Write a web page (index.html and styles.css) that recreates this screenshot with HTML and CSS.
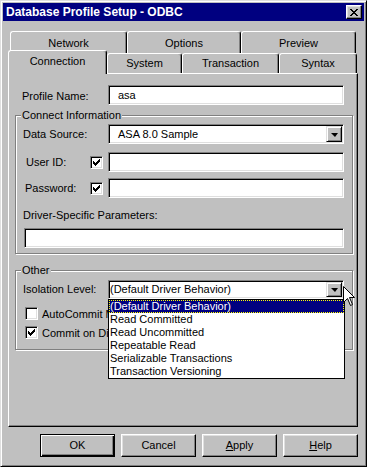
FILE: index.html
```html
<!DOCTYPE html>
<html lang="en">
<head>
    <meta charset="UTF-8">
    <title>Database Profile Setup - ODBC</title>
    <link rel="stylesheet" href="styles.css">
</head>
<body>
    <div class="window">
        <div class="titlebar">
            <span class="title">Database Profile Setup - ODBC</span>
            <span class="close">
                <svg width="8" height="7" viewBox="0 0 8 7">
                    <path d="M0 0h2v1h1v1h2v-1h1v-1h2v1h-1v1h-1v1h-1v1h1v1h1v1h1v1h-2v-1h-1v-1h-2v1h-1v1h-2v-1h1v-1h1v-1h1v-1h-1v-1h-1z" fill="#000"/>
                </svg>
            </span>
        </div>

        <div class="content">
            <!-- Tab strip, two rows -->
            <div class="tabrow back">
                <div class="tab t-network">Network</div>
                <div class="tab t-options">Options</div>
                <div class="tab t-preview">Preview</div>
            </div>
            <div class="tabrow front">
                <div class="tab selected t-connection">Connection</div>
                <div class="tab t-system">System</div>
                <div class="tab t-transaction">Transaction</div>
                <div class="tab t-syntax">Syntax</div>
            </div>

            <div class="panel">
                <div class="row profile">
                    <label class="lbl">Profile Name:</label>
                    <div class="field">asa</div>
                </div>

                <fieldset class="group connect">
                    <legend>Connect Information</legend>
                    <div class="row">
                        <label class="lbl">Data Source:</label>
                        <div class="combo">
                            <span class="combo-text">ASA 8.0 Sample</span>
                            <span class="arrow"><span class="tri"></span></span>
                        </div>
                    </div>
                    <div class="row user">
                        <label class="lbl-short uid">User ID:</label>
                        <span class="check"><svg width="7" height="7" viewBox="0 0 7 7"><path d="M6 0h1v3h-1v1h-1v1h-1v1h-1v1h-1v-1h-1v-1h-1v-3h1v1h1v1h1v-1h1v-1h1z" fill="#000"/></svg></span>
                        <div class="field"></div>
                    </div>
                    <div class="row pass">
                        <label class="lbl-short pwd">Password:</label>
                        <span class="check"><svg width="7" height="7" viewBox="0 0 7 7"><path d="M6 0h1v3h-1v1h-1v1h-1v1h-1v1h-1v-1h-1v-1h-1v-3h1v1h1v1h1v-1h1v-1h1z" fill="#000"/></svg></span>
                        <div class="field"></div>
                    </div>
                    <div class="driver-label">Driver-Specific Parameters:</div>
                    <div class="field wide"></div>
                </fieldset>

                <fieldset class="group other">
                    <legend>Other</legend>
                    <div class="row iso">
                        <label class="lbl">Isolation Level:</label>
                        <div class="combo plain">
                            <span class="combo-text">(Default Driver Behavior)</span>
                            <span class="arrow"><span class="tri"></span></span>
                            <ul class="list">
                                <li class="sel">(Default Driver Behavior)</li>
                                <li>Read Committed</li>
                                <li>Read Uncommitted</li>
                                <li>Repeatable Read</li>
                                <li>Serializable Transactions</li>
                                <li>Transaction Versioning</li>
                            </ul>
                        </div>
                    </div>
                    <div class="checkrow first">
                        <span class="check"></span>
                        <span>AutoCommit Mode</span>
                    </div>
                    <div class="checkrow">
                        <span class="check"><svg width="7" height="7" viewBox="0 0 7 7"><path d="M6 0h1v3h-1v1h-1v1h-1v1h-1v1h-1v-1h-1v-1h-1v-3h1v1h1v1h1v-1h1v-1h1z" fill="#000"/></svg></span>
                        <span>Commit on Disconnect</span>
                    </div>
                </fieldset>
            </div>

            <div class="buttons">
                <div class="btn default">OK</div>
                <div class="btn">Cancel</div>
                <div class="btn"><u>A</u>pply</div>
                <div class="btn"><u>H</u>elp</div>
            </div>
        </div>

        <!-- mouse pointer over the combo arrow -->
        <svg class="cursor" width="12" height="20" viewBox="0 0 12 20">
            <path d="M0.5 0.5 L0.5 16.5 L4.5 12.5 L7.5 19.5 L9.5 18.5 L6.5 11.5 L11.5 11.5 Z" fill="#fff" stroke="#000" stroke-width="1"/>
        </svg>
    </div>
</body>
</html>
```

FILE: styles.css
```css
body {
    margin: 0;
    background: #c0c0c0;
    font-family: "Liberation Sans", Arial, sans-serif;
    font-size: 11px;
    color: #000;
}
.window {
    position: relative;
    width: 367px;
    height: 467px;
    box-sizing: border-box;
    background: #c0c0c0;
    border: 1px solid;
    border-color: #dfdfdf #000 #000 #dfdfdf;
    box-shadow: inset 1px 1px #fff, inset -1px -1px #808080;
    padding: 2px;
}
.titlebar {
    height: 18px;
    background: #000080;
    color: #fff;
    display: flex;
    align-items: center;
    justify-content: space-between;
    padding: 0 2px 0 3px;
}
.title {
    font-weight: bold;
    font-size: 12px;
}
.close {
    width: 16px;
    height: 14px;
    box-sizing: border-box;
    background: #c0c0c0;
    border: 1px solid;
    border-color: #fff #000 #000 #fff;
    box-shadow: inset -1px -1px #808080, inset 1px 1px #dfdfdf;
    display: flex;
    align-items: center;
    justify-content: center;
}
.close svg {
    shape-rendering: crispEdges;
}
.content {
    padding: 10px 6px 0 5px;
}

/* tabs */
.tabrow {
    display: flex;
}
.tabrow.back {
    height: 22px;
    margin-left: 2px;
}
.tabrow.front {
    height: 20px;
    align-items: flex-end;
}
.tab {
    box-sizing: border-box;
    background: #c0c0c0;
    border: 1px solid;
    border-color: #fff #000 #c0c0c0 #fff;
    border-bottom: none;
    border-radius: 3px 3px 0 0;
    box-shadow: inset -1px 0 #808080;
    text-align: center;
    line-height: 13px;
}
.back .tab {
    height: 22px;
    padding-top: 5px;
}
.front .tab {
    height: 20px;
    padding-top: 3px;
}
.front .tab.selected {
    height: 24px;
    margin-bottom: -1px;
    padding-top: 4px;
    position: relative;
    z-index: 1;
}
.t-network { width: 117px; }
.t-options { width: 114px; }
.t-preview { width: 115px; }
.t-connection { width: 99px; }
.t-system { width: 75px; }
.t-transaction { width: 97px; }
.t-syntax { width: 78px; }

/* page of the tab control */
.panel {
    height: 354px;
    box-sizing: border-box;
    border: 1px solid;
    border-color: #fff #000 #000 #fff;
    box-shadow: inset -1px -1px #808080;
    padding: 11px 4px 0 6px;
}
.row {
    display: flex;
    align-items: center;
    height: 20px;
}
.row.profile {
    padding-left: 7px;
}
.lbl {
    width: 85px;
    flex: none;
}
.profile .lbl {
    width: 86px;
    padding-top: 2px;
}
.lbl-short {
    width: 64px;
    flex: none;
}
.uid { margin-left: 3px; }
.pwd { margin-left: 2px; width: 65px; }
.field {
    width: 236px;
    height: 20px;
    box-sizing: border-box;
    background: #fff;
    border: 1px solid;
    border-color: #808080 #fff #fff #808080;
    box-shadow: inset 1px 1px #000, inset -1px -1px #dfdfdf;
    padding-left: 9px;
    line-height: 18px;
}
.field.wide {
    width: 320px;
    margin: 6px 0 0 1px;
}
.check {
    width: 13px;
    height: 13px;
    box-sizing: border-box;
    flex: none;
    background: #fff;
    border: 1px solid;
    border-color: #808080 #fff #fff #808080;
    box-shadow: inset 1px 1px #000, inset -1px -1px #dfdfdf;
    display: flex;
    align-items: center;
    justify-content: center;
}
.check svg {
    shape-rendering: crispEdges;
}
.row.user .field,
.row.pass .field {
    margin-left: 5px;
}
.row.user { margin-top: 8px; }
.row.pass { margin-top: 6px; }
.driver-label {
    margin-top: 11px;
    line-height: 13px;
}

/* combo boxes */
.combo {
    position: relative;
    width: 236px;
    height: 20px;
    box-sizing: border-box;
    background: #fff;
    border: 1px solid;
    border-color: #808080 #fff #fff #808080;
    box-shadow: inset 1px 1px #000, inset -1px -1px #dfdfdf;
    display: flex;
    align-items: center;
    padding: 1px;
}
.combo.plain {
    height: 19px;
}
.combo-text {
    flex: 1;
    padding-left: 8px;
}
.plain .combo-text {
    padding-left: 0;
}
.arrow {
    width: 16px;
    height: 16px;
    box-sizing: border-box;
    background: #c0c0c0;
    border: 1px solid;
    border-color: #dfdfdf #000 #000 #dfdfdf;
    box-shadow: inset 1px 1px #fff, inset -1px -1px #808080;
    display: flex;
    align-items: center;
    justify-content: center;
}
.plain .arrow {
    height: 15px;
}
.tri {
    width: 0;
    height: 0;
    border-left: 4px solid transparent;
    border-right: 3px solid transparent;
    border-top: 4px solid #000;
    margin-top: 1px;
}
/* open drop-down list, lies over the check boxes */
.list {
    position: absolute;
    left: -1px;
    top: 18px;
    width: 237px;
    box-sizing: border-box;
    margin: 0;
    padding: 0;
    list-style: none;
    background: #fff;
    border: 1px solid #000;
    z-index: 2;
}
.list li {
    height: 13px;
    line-height: 13px;
    padding-left: 1px;
    white-space: nowrap;
}
.list li.sel {
    background: #000080;
    color: #fff;
    outline: 1px dotted #ff0;
    outline-offset: -1px;
}

/* group boxes */
.group {
    margin: 4px 0 0;
    padding: 2px 7px 5px;
    min-width: 0;
    border: 1px solid #808080;
    box-shadow: inset 1px 1px #fff, 1px 1px #fff;
}
.group legend {
    margin-left: -2px;
    padding: 0 1px;
    line-height: 13px;
    background: #c0c0c0;
}
.group.other {
    margin-top: 10px;
    padding-bottom: 10px;
}
.checkrow {
    display: flex;
    align-items: center;
    gap: 4px;
    height: 13px;
    margin: 6px 0 0 2px;
    white-space: nowrap;
}
.checkrow.first {
    margin-top: 8px;
}

/* dialog buttons */
.buttons {
    display: flex;
    justify-content: flex-end;
    gap: 6px;
    margin-top: 7px;
}
.btn {
    width: 75px;
    height: 23px;
    box-sizing: border-box;
    background: #c0c0c0;
    border: 1px solid;
    border-color: #fff #000 #000 #fff;
    box-shadow: inset -1px -1px #808080, inset 1px 1px #dfdfdf;
    text-align: center;
    line-height: 20px;
}
.btn.default {
    border-color: #000;
    box-shadow: inset 1px 1px #fff, inset -1px -1px #000, inset -2px -2px #808080;
}
.cursor {
    position: absolute;
    left: 342px;
    top: 285px;
    z-index: 3;
}
```
